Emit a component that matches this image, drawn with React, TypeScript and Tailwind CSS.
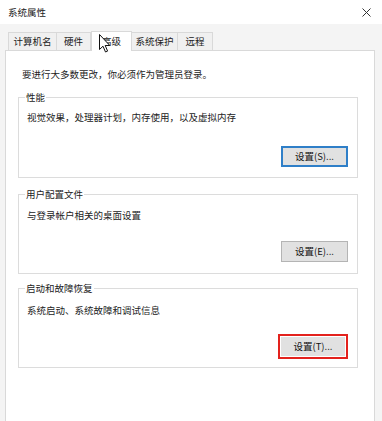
const font = { fontFamily: '"Microsoft YaHei", "Noto Sans CJK SC", sans-serif' }

type GroupProps = {
  legend: string
  desc: string
  button: string
  descTop: string
  btnGap: string
  bottom: string
  highlight?: boolean
  focused?: boolean
}

function Group({ legend, desc, button, descTop, btnGap, bottom, highlight, focused }: GroupProps) {
  return (
    <div className={`relative ml-[12px] w-[340px] border border-[#dcdcdc] ${descTop} ${bottom}`}>
      <span className="absolute -top-[7px] left-[6px] bg-white px-[1px] text-[9.5px] leading-[12px] text-[#222]">
        {legend}
      </span>
      <p className="pl-[8px] text-[9.5px] leading-[12px] text-[#222]">{desc}</p>
      <div className={`flex justify-end pr-[9px] ${btnGap}`}>
        {highlight ? (
          <div className="border-2 border-[#e3221d] p-[1px]">
            <button
              type="button"
              className="flex h-[19px] w-[64px] items-center justify-center bg-[#e1e1e1] text-[9.5px] text-[#111]"
            >
              {button}
            </button>
          </div>
        ) : (
          <button
            type="button"
            className={`flex h-[21px] w-[67px] items-center justify-center bg-[#e1e1e1] text-[9.5px] text-[#111] ${
              focused ? 'border-2 border-[#2f7fc8]' : 'border border-[#b4b4b4]'
            }`}
          >
            {button}
          </button>
        )}
      </div>
    </div>
  )
}

const tabs = [
  { label: '计算机名', w: 'w-[49px]' },
  { label: '硬件', w: 'w-[35px]' },
  { label: '高级', w: 'w-[41px]', active: true },
  { label: '系统保护', w: 'w-[47px]' },
  { label: '远程', w: 'w-[36px]' },
]

export default function App() {
  return (
    <div className="relative h-[421px] w-[382px] overflow-hidden bg-[#f4f4f4]" style={font}>
      {/* title bar */}
      <div className="flex h-[24px] items-center justify-between bg-white pl-[8px] pr-[10px]">
        <span className="text-[9.5px] text-[#222]">系统属性</span>
        <svg width="9" height="9" viewBox="0 0 9 9" className="mr-[1px]">
          <path d="M0.5 0.5 L8.5 8.5 M8.5 0.5 L0.5 8.5" stroke="#333" strokeWidth="1" />
        </svg>
      </div>

      {/* tabs */}
      <div className="ml-[8px] mt-[7px] flex items-end">
        {tabs.map((t) =>
          t.active ? (
            <div
              key={t.label}
              className={`relative z-10 -mb-px flex h-[20px] ${t.w} items-center justify-center border border-b-0 border-[#d9d9d9] bg-white text-[9.5px] text-[#222]`}
            >
              {t.label}
            </div>
          ) : (
            <div
              key={t.label}
              className={`-ml-px flex h-[18px] ${t.w} items-center justify-center border border-b-0 border-[#d9d9d9] bg-[#f0f0f0] text-[9.5px] text-[#222] first:ml-0`}
            >
              {t.label}
            </div>
          ),
        )}
      </div>

      {/* panel */}
      <div className="ml-[5px] h-[380px] w-[370px] border border-[#d9d9d9] bg-white pt-[17px]">
        <p className="pl-[16px] text-[9.5px] leading-[12px] text-[#222]">要进行大多数更改，你必须作为管理员登录。</p>
        <div className="mt-[17px]">
          <Group
            legend="性能"
            desc="视觉效果，处理器计划，内存使用，以及虚拟内存"
            button="设置(S)..."
            descTop="pt-[13px]"
            btnGap="mt-[23px]"
            bottom="pb-[10px]"
            focused
          />
        </div>
        <div className="mt-[16px]">
          <Group
            legend="用户配置文件"
            desc="与登录帐户相关的桌面设置"
            button="设置(E)..."
            descTop="pt-[14px]"
            btnGap="mt-[20px]"
            bottom="pb-[11px]"
          />
        </div>
        <div className="mt-[14px]">
          <Group
            legend="启动和故障恢复"
            desc="系统启动、系统故障和调试信息"
            button="设置(T)..."
            descTop="pt-[15px]"
            btnGap="mt-[18px]"
            bottom="pb-[8px]"
            highlight
          />
        </div>
      </div>

      {/* mouse cursor */}
      <svg className="absolute left-[99px] top-[34px] z-20" width="12" height="19" viewBox="0 0 12 19">
        <path
          d="M0.5 0.5 L0.5 15.5 L4 12.2 L6.5 18 L8.6 17.1 L6.2 11.5 L10.8 11.5 Z"
          fill="#fff"
          stroke="#111"
          strokeWidth="1"
          strokeLinejoin="round"
        />
      </svg>
    </div>
  )
}
